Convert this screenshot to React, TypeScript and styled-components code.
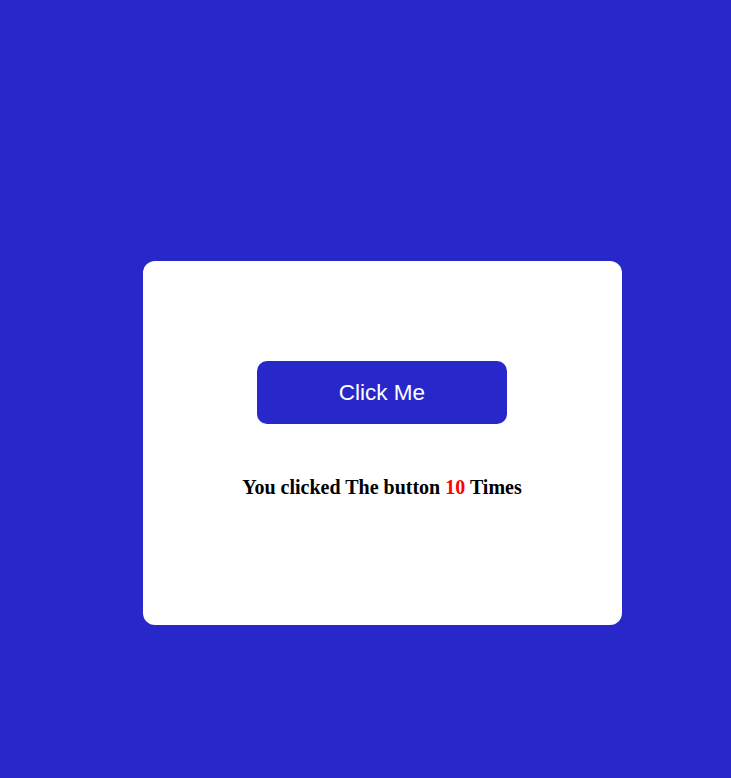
import React, { useState } from "react";
import styled, { createGlobalStyle } from "styled-components";

const Global = createGlobalStyle`
  html, body { margin: 0; padding: 0; background: #2827c9; }
  body { font-family: "Liberation Serif", "Times New Roman", serif; }
`;

const Page = styled.div`
  min-height: 778px;
  padding: 261px 0 0 143px;
  box-sizing: border-box;
`;

const Card = styled.div`
  width: 479px;
  height: 364px;
  background: #ffffff;
  border-radius: 12px;
  box-sizing: border-box;
  padding: 100px 1px 0 0;
  display: flex;
  flex-direction: column;
  align-items: center;
`;

const Button = styled.button`
  width: 250px;
  height: 63px;
  border: none;
  border-radius: 10px;
  background: #2827c9;
  color: #ffffff;
  font-family: "Liberation Sans", Arial, sans-serif;
  font-size: 22.5px;
  cursor: pointer;
`;

const Message = styled.h3`
  margin: 52px 0 0;
  font-family: "Liberation Serif", "Times New Roman", serif;
  font-size: 20px;
  font-weight: bold;
  color: #000000;
`;

const Count = styled.span`
  color: #ff0000;
`;

export default function App() {
  const [count, setCount] = useState(10);
  return (
    <>
      <Global />
      <Page>
        <Card>
          <Button onClick={() => setCount((c) => c + 1)}>Click Me</Button>
          <Message>
            You clicked The button <Count>{count}</Count> Times
          </Message>
        </Card>
      </Page>
    </>
  );
}
